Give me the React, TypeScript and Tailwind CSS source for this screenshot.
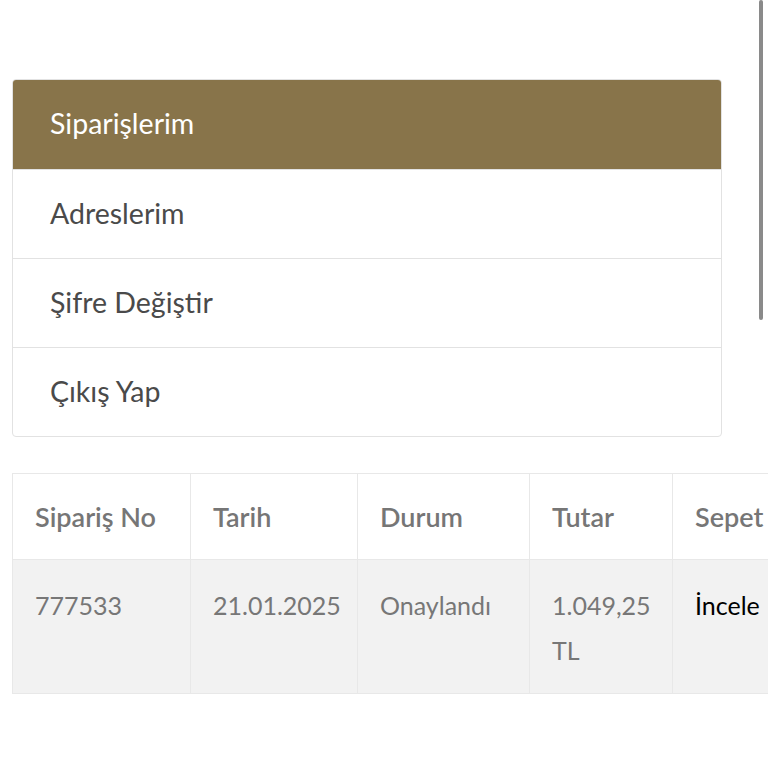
import React from 'react';

const menu = ['Siparişlerim', 'Adreslerim', 'Şifre Değiştir', 'Çıkış Yap'];

const cols = [
  { title: 'Sipariş No', w: 'w-[178px]' },
  { title: 'Tarih', w: 'w-[167px]' },
  { title: 'Durum', w: 'w-[172px]' },
  { title: 'Tutar', w: 'w-[143px]' },
  { title: 'Sepet', w: 'w-[160px]' },
];

export default function App() {
  return (
    <div className="relative w-[768px] h-[768px] overflow-hidden bg-white" style={{ fontFamily: 'Lato, "Noto Sans", sans-serif' }}>
      <div className="absolute right-[5px] top-0 w-[4px] h-[320px] rounded-full bg-[#8a8a8a]" />

      <div className="pt-[79px] pl-[12px]">
        <div className="w-[710px] rounded-[4px] border border-[#e2e2e2] overflow-hidden">
          {menu.map((m, i) => (
            <div
              key={m}
              className={
                i === 0
                  ? 'h-[89px] flex items-center pl-[37px] pb-[2px] bg-[#88744a] text-white text-[28.5px]'
                  : 'h-[89px] flex items-center pl-[37px] pb-[2px] border-t border-[#e2e2e2] text-[#4a4a4a] text-[28.5px]'
              }
            >
              {m}
            </div>
          ))}
        </div>

        <div className="mt-[36px] w-[756px] overflow-hidden">
          <table className="table-fixed w-[820px] border-collapse text-[25px] leading-[45px]">
            <colgroup>
              {cols.map(c => <col key={c.title} className={c.w} />)}
            </colgroup>
            <thead>
              <tr>
                {cols.map(c => (
                  <th key={c.title} className="whitespace-nowrap text-left align-top text-[27px] font-semibold text-[#767676] px-[22px] py-[20px] border border-[#e8e8e8]">
                    {c.title}
                  </th>
                ))}
              </tr>
            </thead>
            <tbody>
              <tr className="bg-[#f2f2f2]">
                <td className="whitespace-nowrap align-top text-[#777] px-[22px] pt-[23px] pb-[20px] border border-[#e8e8e8]">777533</td>
                <td className="whitespace-nowrap align-top text-[#777] px-[22px] pt-[23px] pb-[20px] border border-[#e8e8e8]">21.01.2025</td>
                <td className="whitespace-nowrap align-top text-[#777] px-[22px] pt-[23px] pb-[20px] border border-[#e8e8e8]">Onaylandı</td>
                <td className="whitespace-nowrap align-top text-[#777] px-[22px] pt-[23px] pb-[20px] border border-[#e8e8e8]">1.049,25<br />TL</td>
                <td className="whitespace-nowrap align-top text-black px-[22px] pt-[23px] pb-[20px] border border-[#e8e8e8]">İncele</td>
              </tr>
            </tbody>
          </table>
        </div>
      </div>
    </div>
  );
}
